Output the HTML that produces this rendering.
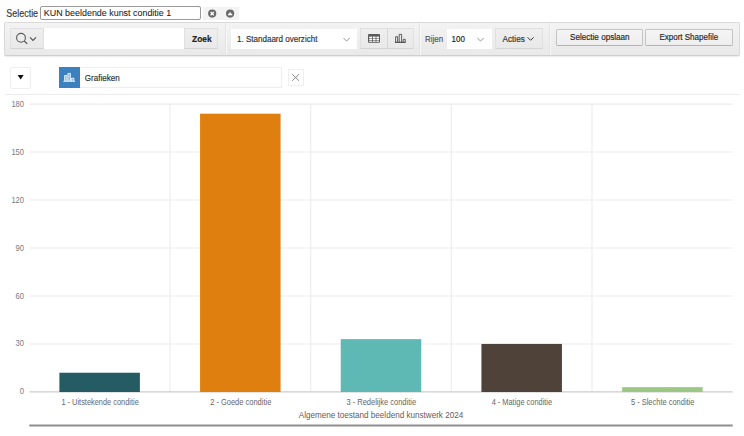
<!DOCTYPE html>
<html><head><meta charset="utf-8">
<style>
*{box-sizing:border-box;margin:0;padding:0}
html,body{width:744px;height:436px;overflow:hidden;background:#fff;font-family:"Liberation Sans", sans-serif;color:#333;position:relative}
.a{position:absolute}
</style></head><body>
<div class="a" style="left:40.3px;top:6px;width:160.7px;height:13.6px;border:1px solid #9a9a9a;border-radius:2px;background:#fff"></div>
<div class="a" style="left:203px;top:6.6px;width:35.5px;height:13px;background:#f3f3f3"></div>
<div class="a" style="left:4px;top:22.4px;width:735.6px;height:33.2px;background:linear-gradient(#f3f3f3,#e9e9e9);border:1px solid #dadada;border-bottom-color:#cfcfcf;border-radius:2px;box-shadow:0 1px 1px rgba(0,0,0,.08)"></div>
<div class="a" style="left:10.4px;top:28.4px;width:33.8px;height:20.8px;background:linear-gradient(#eeeeee,#e9e9e9);border:1px solid #e0e0e0;border-bottom-color:#d4d4d4"></div>
<div class="a" style="left:44.2px;top:28.4px;width:140px;height:20.8px;background:#fff"></div>
<div class="a" style="left:184.2px;top:28.3px;width:34.2px;height:21.2px;background:linear-gradient(#eeeeee,#e9e9e9);border:1px solid #e0e0e0;border-bottom-color:#d4d4d4"></div>
<div class="a" style="left:224.5px;top:23.4px;width:1px;height:31.4px;background:#e3e3e3"></div><div class="a" style="left:225.5px;top:23.4px;width:1px;height:31.4px;background:#f7f7f7"></div>
<div class="a" style="left:231.2px;top:29.2px;width:126px;height:19.4px;background:#fff"></div>
<div class="a" style="left:360.4px;top:28.3px;width:53.4px;height:21px;background:linear-gradient(#eeeeee,#e9e9e9);border:1px solid #e0e0e0;border-bottom-color:#d4d4d4"></div>
<div class="a" style="left:386.6px;top:28.3px;width:1px;height:21px;background:#d6d6d6"></div>
<div class="a" style="left:419px;top:23.4px;width:1px;height:31.4px;background:#e3e3e3"></div><div class="a" style="left:420.0px;top:23.4px;width:1px;height:31.4px;background:#f7f7f7"></div>
<div class="a" style="left:446.8px;top:29px;width:45px;height:20.2px;background:#fff"></div>
<div class="a" style="left:495.3px;top:28.4px;width:48px;height:20.8px;background:linear-gradient(#eeeeee,#e9e9e9);border:1px solid #e0e0e0;border-bottom-color:#d4d4d4"></div>
<div class="a" style="left:549px;top:23.4px;width:1px;height:31.4px;background:#e3e3e3"></div><div class="a" style="left:550.0px;top:23.4px;width:1px;height:31.4px;background:#f7f7f7"></div>
<div class="a" style="left:555.6px;top:29.1px;width:87.4px;height:16.6px;background:linear-gradient(#f4f4f4,#eeeeee);border:1px solid #c4c4c4;border-bottom-color:#b4b4b4;border-radius:1.5px"></div>
<div class="a" style="left:645px;top:29.1px;width:87.8px;height:16.6px;background:linear-gradient(#f4f4f4,#eeeeee);border:1px solid #c4c4c4;border-bottom-color:#b4b4b4;border-radius:1.5px"></div>
<div class="a" style="left:10.2px;top:66.9px;width:20.8px;height:22px;border:1px solid #eeeeee;border-radius:2px;background:#fff"></div>
<div class="a" style="left:58.6px;top:67.2px;width:223.2px;height:21px;border:1px solid #eeeeee;background:#fff"></div>
<div class="a" style="left:58.9px;top:66.9px;width:20.9px;height:21.2px;background:#3b81c0"></div>
<div class="a" style="left:288px;top:69.2px;width:15.8px;height:16.6px;border:1px solid #efefef;background:#fff"></div>
<div class="a" style="left:4.8px;top:94px;width:735px;height:1px;background:#ececec"></div>
<svg class="a" style="left:0;top:0" width="744" height="436" font-family='"Liberation Sans", sans-serif'>
 <g stroke="#ebebeb" stroke-width="1.1">
  <line x1="29.3" y1="104.1" x2="732.7" y2="104.1"/><line x1="29.3" y1="152.07" x2="732.7" y2="152.07"/><line x1="29.3" y1="200.04" x2="732.7" y2="200.04"/><line x1="29.3" y1="248.01" x2="732.7" y2="248.01"/><line x1="29.3" y1="295.98" x2="732.7" y2="295.98"/><line x1="29.3" y1="343.95" x2="732.7" y2="343.95"/><line x1="169.98" y1="104.1" x2="169.98" y2="391.92"/><line x1="310.66" y1="104.1" x2="310.66" y2="391.92"/><line x1="451.34" y1="104.1" x2="451.34" y2="391.92"/><line x1="592.02" y1="104.1" x2="592.02" y2="391.92"/>
 </g>
 <line x1="29.3" y1="391.92" x2="732.7" y2="391.92" stroke="#cdcdcd" stroke-width="1.3"/>
 <rect x="59.39" y="372.73" width="80.5" height="19.29" fill="#255c64"/><rect x="200.07" y="113.69" width="80.5" height="278.33" fill="#de7f10"/><rect x="340.75" y="339.15" width="80.5" height="52.87" fill="#5eb8b4"/><rect x="481.43" y="343.95" width="80.5" height="48.07" fill="#4f4238"/><rect x="622.11" y="387.12" width="80.5" height="4.90" fill="#9cc886"/>
 <line x1="29.3" y1="425.6" x2="732.7" y2="425.6" stroke="#8e8e8e" stroke-width="2"/>
 <!-- icons -->
 <circle cx="212.2" cy="13.6" r="4.1" fill="#6a6a6a"/>
 <path d="M210.6 12 L213.8 15.2 M213.8 12 L210.6 15.2" stroke="#fff" stroke-width="1.3"/>
 <circle cx="230.1" cy="13.6" r="4.1" fill="#6a6a6a"/>
 <path d="M228 15 L230.1 12.4 L232.2 15 Z" fill="#fff" stroke="#fff" stroke-width="0.6" stroke-linejoin="round"/>
 <circle cx="21" cy="37.8" r="4.4" fill="none" stroke="#5a5a5a" stroke-width="1.1"/>
 <path d="M24.2 41 L27.2 43.8" stroke="#5a5a5a" stroke-width="1.2"/>
 <path d="M30 37.4 L33 40.4 L36 37.4" fill="none" stroke="#505050" stroke-width="1.1"/>
 <path d="M343.5 38 L346.6 41.1 L349.7 38" fill="none" stroke="#888" stroke-width="0.9"/>
 <path d="M477.4 38 L480.5 41.1 L483.6 38" fill="none" stroke="#888" stroke-width="0.9"/>
 <path d="M527.6 37.3 L530.6 40.3 L533.6 37.3" fill="none" stroke="#333" stroke-width="1"/>
 <!-- table icon -->
 <rect x="368" y="34" width="12" height="8.8" rx="1" fill="#5a5a5a"/>
 <g fill="#fff">
  <rect x="369.2" y="36.6" width="2.8" height="1.4"/><rect x="372.8" y="36.6" width="2.8" height="1.4"/><rect x="376.4" y="36.6" width="2.6" height="1.4"/>
  <rect x="369.2" y="38.6" width="2.8" height="1.4"/><rect x="372.8" y="38.6" width="2.8" height="1.4"/><rect x="376.4" y="38.6" width="2.6" height="1.4"/>
  <rect x="369.2" y="40.6" width="2.8" height="1.2"/><rect x="372.8" y="40.6" width="2.8" height="1.2"/><rect x="376.4" y="40.6" width="2.6" height="1.2"/>
 </g>
 <!-- bar chart icon -->
 <g fill="none" stroke="#505050" stroke-width="0.9">
  <path d="M395.6 42.2 V36.7 H397.6 V42.2"/>
  <path d="M399.2 42.2 V34.4 H401.6 V42.2"/>
  <path d="M403.2 42.2 V39.3 H405.2 V42.2"/>
 </g>
 <path d="M394.9 42.3 H405.7" stroke="#404040" stroke-width="1.1"/>
 <!-- tab icon -->
 <g fill="rgba(255,255,255,0.45)" stroke="#e8f4ff" stroke-width="0.9">
  <path d="M64.6 81 V75.5 H66.9 V81"/>
  <path d="M67.9 81 V73.4 H70.4 V81"/>
  <path d="M71.4 81 V78.2 H73.9 V81"/>
 </g>
 <path d="M63.4 81.3 H75" stroke="#e8f4ff" stroke-width="1"/>
 <path d="M17.6 75 H23.7 L20.65 79.4 Z" fill="#111"/>
 <path d="M292.2 74.2 L299 80.8 M299 74.2 L292.2 80.8" stroke="#777" stroke-width="0.9"/>
 <text x="6.3" y="16.8" font-size="10.6" fill="#3a3a3a" stroke="#3a3a3a" stroke-width="0.18" textLength="31.8" lengthAdjust="spacingAndGlyphs">Selectie</text><text x="43.8" y="16.2" font-size="9.2" fill="#222" stroke="#222" stroke-width="0.06" textLength="127.4" lengthAdjust="spacingAndGlyphs">KUN beeldende kunst conditie 1</text><text x="192" y="41.9" font-size="9.0" fill="#222" stroke="#222" stroke-width="0.18" font-weight="bold" textLength="19.6" lengthAdjust="spacingAndGlyphs">Zoek</text><text x="237" y="41.9" font-size="8.9" fill="#333" stroke="#333" stroke-width="0.18" textLength="80.4" lengthAdjust="spacingAndGlyphs">1. Standaard overzicht</text><text x="425" y="41.7" font-size="8.9" fill="#555" stroke="#555" stroke-width="0.18" textLength="18.2" lengthAdjust="spacingAndGlyphs">Rijen</text><text x="451.6" y="41.7" font-size="8.9" fill="#222" stroke="#222" stroke-width="0.18" textLength="13.2" lengthAdjust="spacingAndGlyphs">100</text><text x="502.6" y="41.6" font-size="8.9" fill="#333" stroke="#333" stroke-width="0.18" textLength="22.2" lengthAdjust="spacingAndGlyphs">Acties</text><text x="570" y="39.7" font-size="8.5" fill="#2a2a2a" stroke="#2a2a2a" stroke-width="0.18" textLength="59.6" lengthAdjust="spacingAndGlyphs">Selectie opslaan</text><text x="659.4" y="39.7" font-size="8.5" fill="#2a2a2a" stroke="#2a2a2a" stroke-width="0.18" textLength="58.8" lengthAdjust="spacingAndGlyphs">Export Shapefile</text><text x="84.8" y="80.6" font-size="8.7" fill="#333" stroke="#333" stroke-width="0.18" textLength="34.8" lengthAdjust="spacingAndGlyphs">Grafieken</text><text x="24.0" y="106.6" font-size="8.7" fill="#7a7a7a" text-anchor="end" textLength="12.6" lengthAdjust="spacingAndGlyphs">180</text><text x="24.0" y="154.6" font-size="8.7" fill="#7a7a7a" text-anchor="end" textLength="12.6" lengthAdjust="spacingAndGlyphs">150</text><text x="24.0" y="202.5" font-size="8.7" fill="#7a7a7a" text-anchor="end" textLength="12.6" lengthAdjust="spacingAndGlyphs">120</text><text x="24.0" y="250.5" font-size="8.7" fill="#7a7a7a" text-anchor="end" textLength="8.5" lengthAdjust="spacingAndGlyphs">90</text><text x="24.0" y="298.5" font-size="8.7" fill="#7a7a7a" text-anchor="end" textLength="8.5" lengthAdjust="spacingAndGlyphs">60</text><text x="24.0" y="346.4" font-size="8.7" fill="#7a7a7a" text-anchor="end" textLength="8.5" lengthAdjust="spacingAndGlyphs">30</text><text x="24.0" y="394.4" font-size="8.7" fill="#7a7a7a" text-anchor="end" textLength="4.3" lengthAdjust="spacingAndGlyphs">0</text><text x="100.1" y="404.7" font-size="8.7" fill="#666" text-anchor="middle" textLength="77.39999999999999" lengthAdjust="spacingAndGlyphs">1 - Uitstekende conditie</text><text x="240.75" y="404.7" font-size="8.7" fill="#666" text-anchor="middle" textLength="61.1" lengthAdjust="spacingAndGlyphs">2 - Goede conditie</text><text x="381.25" y="404.7" font-size="8.7" fill="#666" text-anchor="middle" textLength="69.69999999999999" lengthAdjust="spacingAndGlyphs">3 - Redelijke conditie</text><text x="521.9" y="404.7" font-size="8.7" fill="#666" text-anchor="middle" textLength="60.5" lengthAdjust="spacingAndGlyphs">4 - Matige conditie</text><text x="662.7" y="404.7" font-size="8.7" fill="#666" text-anchor="middle" textLength="63.5" lengthAdjust="spacingAndGlyphs">5 - Slechte conditie</text><text x="381.0" y="418.1" font-size="9.0" fill="#5e5e5e" text-anchor="middle" textLength="164.4" lengthAdjust="spacingAndGlyphs">Algemene toestand beeldend kunstwerk 2024</text>
</svg>
</body></html>
